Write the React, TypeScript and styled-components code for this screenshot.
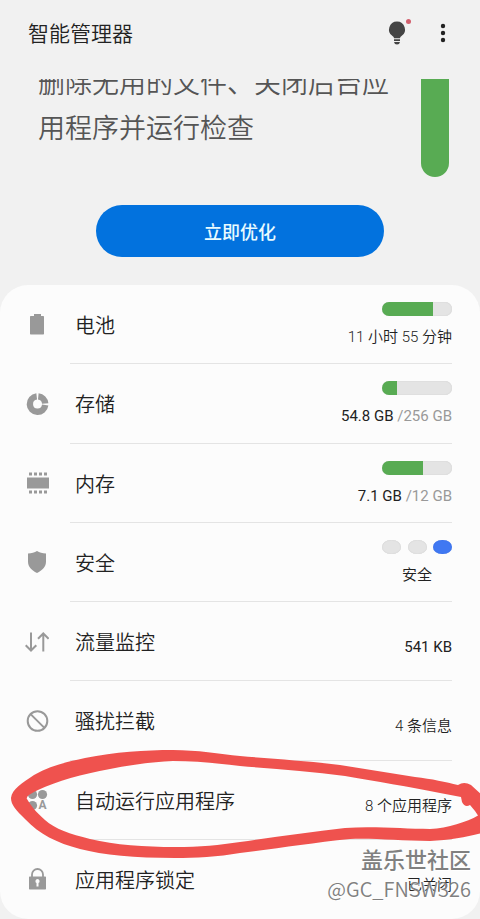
import React from "react";
import styled, { createGlobalStyle } from "styled-components";

const GlobalStyle = createGlobalStyle`
  *, *::before, *::after { box-sizing: border-box; }
  body {
    margin: 0;
    background: #f1f1f1;
    color: #222;
    font-family: Roboto, "Noto Sans CJK SC", sans-serif;
    font-weight: 350;
  }
`;

const Screen = styled.div`
  position: relative;
  display: flex;
  flex-direction: column;
  min-height: 100vh;
  overflow: hidden;
`;

const Header = styled.header`
  display: flex;
  align-items: center;
  height: 79px;
  padding: 0 28px 12px;
`;

const Title = styled.h1`
  flex: 1;
  margin: 0;
  font-size: 21px;
  line-height: 32px;
  font-weight: 350;
`;

const HeaderActions = styled.div`
  display: flex;
  gap: 14px;
  margin-right: -7px;
`;

const IconButton = styled.button`
  display: grid;
  place-items: center;
  width: 32px;
  height: 32px;
  padding: 0;
  border: 0;
  background: none;
`;

const Hero = styled.section`
  display: flex;
  justify-content: space-between;
  gap: 20px;
  height: 98px;
  padding: 0 31px 0 38px;
  overflow: hidden;
`;

const HeroText = styled.p`
  margin: -17px 0 0;
  color: #555;
  font-size: 27px;
  line-height: 45px;
`;

const HeroGauge = styled.div`
  flex: none;
  width: 28px;
  border-radius: 0 0 14px 14px;
  background: #58ab53;
`;

const OptimizeButton = styled.button`
  align-self: center;
  width: 60%;
  height: 52px;
  margin: 28px 0;
  border: 0;
  border-radius: 26px;
  background: #0272de;
  color: #e9fbff;
  font-family: inherit;
  font-size: 18px;
  font-weight: 500;
`;

const Card = styled.ul`
  flex: 1;
  display: grid;
  grid-auto-rows: minmax(79px, 1fr);
  margin: 0;
  padding: 0;
  border-radius: 28px;
  background: #fcfcfc;
  list-style: none;
`;

const RowBody = styled.span`
  display: flex;
  justify-content: space-between;
  padding-left: 5px;
  border-bottom: 1px solid #e4e4e4;
`;

const Item = styled.li`
  position: relative;
  display: grid;

  &:last-child ${RowBody} {
    border-bottom: 0;
  }
`;

const RowLink = styled.a`
  display: grid;
  grid-template-columns: 45px 1fr;
  padding: 0 28px 0 25px;
  color: inherit;
  text-decoration: none;
`;

const RowIcon = styled.svg`
  align-self: center;
  width: 24px;
  height: 24px;
  color: #999;
`;

const Label = styled.span`
  align-self: center;
  padding-top: 4px;
  font-size: 20px;
  line-height: 30px;
`;

const Status = styled.span<{ $centered?: boolean; $plain?: boolean }>`
  display: flex;
  flex-direction: column;
  align-items: ${(p) => (p.$centered ? "center" : "flex-end")};
  justify-content: center;
  gap: 10px;
  padding-top: ${(p) => (p.$plain ? 12 : 2)}px;
`;

const Value = styled.span<{ $latin?: boolean }>`
  font-size: 15px;
  line-height: 22px;
  font-weight: ${(p) => (p.$latin ? 400 : 350)};
`;

const Muted = styled.span`
  color: #999;
`;

const Meter = styled.span`
  display: flex;
  width: 70px;
  height: 14px;
  border-radius: 7px;
  background: #e4e4e4;
  box-shadow: inset 0 0 1px #bbb;
  overflow: hidden;
`;

const MeterFill = styled.span`
  background: #58ab53;
`;

const Dots = styled.span`
  display: flex;
  justify-content: space-between;
  width: 70px;
`;

const Dot = styled.span<{ $active?: boolean }>`
  width: 19px;
  height: 14px;
  border-radius: 9px / 7px;
  background: ${(p) => (p.$active ? "#4078f2" : "#e4e4e4")};
  box-shadow: inset 0 0 1px ${(p) => (p.$active ? "#2a5fd8" : "#bbb")};
`;

const Marker = styled.svg`
  position: absolute;
  top: -20px;
  left: 0;
  z-index: 1;
  width: 100%;
  height: 120px;
  pointer-events: none;
`;

const Watermark = styled.div`
  position: absolute;
  right: 9px;
  bottom: 16px;
  z-index: 2;
  display: flex;
  flex-direction: column;
  align-items: flex-end;
  gap: 2px;
  color: #808080;
  font-family: "Noto Sans CJK SC", sans-serif;
  text-shadow: 1px 1px 1px #fff;
  pointer-events: none;
`;

const WatermarkName = styled.span`
  font-size: 22px;
  line-height: 30px;
  font-weight: 500;
`;

const WatermarkUser = styled.span`
  font-size: 20px;
  line-height: 28px;
`;

const icons = {
  battery: (
    <path fill="currentColor" d="M9 1h7v2h2.3q.7 0 .7.7v17q0 .8-.7.8H5.7q-.7 0-.7-.8v-17q0-.7.7-.7H9z" />
  ),
  storage: (
    <g fill="none" stroke="currentColor" strokeWidth="6.4">
      <path d="M11.7 4.4A7.7 7.7 0 1 0 20.2 13" />
      <path d="M13.3 4.4A7.7 7.7 0 0 1 20.2 11.4" />
    </g>
  ),
  memory: (
    <path
      fill="currentColor"
      d="M2 6.500h22v11H2zM4 1.500h3v3H4zm5 0h3v3H9zm5 0h3v3h-3zm5 0h3v3h-3zM4 19.500h3v3H4zm5 0h3v3H9zm5 0h3v3h-3zm5 0h3v3h-3z"
    />
  ),
  shield: (
    <path fill="currentColor" d="M12 1c2.4 1.5 5.4 2.2 9 2.4v8.2c0 5.2-3.6 9-9 11.4-5.4-2.4-9-6.2-9-11.4V3.4C6.6 3.2 9.6 2.5 12 1z" />
  ),
  traffic: (
    <path
      fill="none"
      stroke="currentColor"
      strokeWidth="2"
      d="M6 2.5v18M.7 15.2 6 20.5l5.3-5.3M18.3 21.5V3.5M13 8.8l5.3-5.3 5.3 5.3"
    />
  ),
  block: (
    <g fill="none" stroke="currentColor" strokeWidth="2">
      <circle cx="12.5" cy="12" r="9.8" />
      <path d="m5.6 5.1 13.8 13.8" />
    </g>
  ),
  apps: (
    <g fill="currentColor">
      <circle cx="7.5" cy="6.5" r="4.6" />
      <circle cx="17.5" cy="6.5" r="4.6" />
      <circle cx="7.5" cy="17.5" r="4.6" />
      <text x="17.5" y="21" textAnchor="middle" fontSize="12" fontWeight="700">
        A
      </text>
    </g>
  ),
  lock: (
    <>
      <path fill="none" stroke="currentColor" strokeWidth="1.8" d="M7 10V7.5a5.5 5.5 0 0 1 11 0V10" />
      <path
        fill="currentColor"
        fillRule="evenodd"
        d="M4.7 9.5h15.6q.7 0 .7.7v11.6q0 .7-.7.7H4.7q-.7 0-.7-.7V10.2q0-.7.7-.7zm7.8 2.5a2.2 2.2 0 0 0-1 4.1V19.5h2v-3.4a2.2 2.2 0 0 0-1-4.1z"
      />
    </>
  ),
};

type Entry = {
  icon: keyof typeof icons;
  label: string;
  value: string;
  total?: string;
  percent?: number;
  levels?: boolean[];
  latin?: boolean;
  marked?: boolean;
};

const entries: Entry[] = [
  { icon: "battery", label: "电池", value: "11 小时 55 分钟", percent: 73 },
  { icon: "storage", label: "存储", value: "54.8 GB ", total: "/256 GB", percent: 21, latin: true },
  { icon: "memory", label: "内存", value: "7.1 GB ", total: "/12 GB", percent: 59, latin: true },
  { icon: "shield", label: "安全", value: "安全", levels: [false, false, true] },
  { icon: "traffic", label: "流量监控", value: "541 KB", latin: true },
  { icon: "block", label: "骚扰拦截", value: "4 条信息" },
  { icon: "apps", label: "自动运行应用程序", value: "8 个应用程序", marked: true },
  { icon: "lock", label: "应用程序锁定", value: "已关闭" },
];

function HandDrawnLoop() {
  return (
    <Marker viewBox="0 740 480 120" preserveAspectRatio="none" aria-hidden="true">
      <path
        fill="#ef524e"
        fillRule="evenodd"
        d="M11 797C12 788 22 782 34 774C50 765 66 761 85 757C115 751 145 749 173 749C197 749 220 753 240 755C275 758 310 760 340 764C365 768 390 772 415 776C432 778 446 781 458 784Q464 780 471 784L482 794V832C468 836 450 839 430 840C400 840 375 837 350 838C310 842 275 848 240 852C218 856 195 857 175 857C135 857 103 854 80 848C57 842 39 833 25 818C16 809 11 804 11 797Z
        M27 798C31 805 36 811 45 819C55 828 70 833 90 838C115 844 145 846 175 846C200 846 220 844 240 841C275 836 310 831 345 827C375 825 405 828 430 828C448 827 467 821 478 814.5L475 810L470 804Q465 807 462 801L461 796L440 792C410 786 375 780 345 775C310 770 275 768 240 765C215 762 195 760 173 760C150 761 130 764 110 768C82 773 57 780 38 789Q25 795 27 798Z"
      />
    </Marker>
  );
}

function EntryRow({ entry }: { entry: Entry }) {
  const plain = entry.percent === undefined && !entry.levels;
  return (
    <Item>
      <RowLink href={`#${entry.icon}`}>
        <RowIcon viewBox="0 0 24 24" aria-hidden="true">
          {icons[entry.icon]}
        </RowIcon>
        <RowBody>
          <Label>{entry.label}</Label>
          <Status $centered={!!entry.levels} $plain={plain}>
            {entry.percent !== undefined && (
              <Meter>
                <MeterFill style={{ width: `${entry.percent}%` }} />
              </Meter>
            )}
            {entry.levels && (
              <Dots>
                {entry.levels.map((active, i) => (
                  <Dot key={i} $active={active} />
                ))}
              </Dots>
            )}
            <Value $latin={entry.latin}>
              {entry.value}
              {entry.total && <Muted>{entry.total}</Muted>}
            </Value>
          </Status>
        </RowBody>
      </RowLink>
      {entry.marked && <HandDrawnLoop />}
    </Item>
  );
}

export default function App() {
  return (
    <>
      <GlobalStyle />
      <Screen>
        <Header>
          <Title>智能管理器</Title>
          <HeaderActions>
            <IconButton type="button" aria-label="提示">
              <svg width="32" height="32" viewBox="0 0 32 32">
                <path
                  fill="#444"
                  d="M16 3.5a8 8 0 0 0-4.5 14.6Q13 19 13 20.2h6q0-1.2 1.5-2.1A8 8 0 0 0 16 3.5zM13 21.3h6v1.7h-6zM13 24h6Q18.5 26.5 16 26.5t-3-2.5z"
                />
                <circle cx="27.5" cy="3.5" r="2.5" fill="#d2606e" />
              </svg>
            </IconButton>
            <IconButton type="button" aria-label="更多选项">
              <svg width="32" height="32" viewBox="0 0 32 32" fill="#222">
                <circle cx="16" cy="8" r="2.2" />
                <circle cx="16" cy="15" r="2.2" />
                <circle cx="16" cy="22" r="2.2" />
              </svg>
            </IconButton>
          </HeaderActions>
        </Header>
        <Hero>
          <HeroText>删除无用的文件、关闭后台应用程序并运行检查</HeroText>
          <HeroGauge />
        </Hero>
        <OptimizeButton type="button">立即优化</OptimizeButton>
        <Card>
          {entries.map((entry) => (
            <EntryRow key={entry.icon} entry={entry} />
          ))}
        </Card>
        <Watermark>
          <WatermarkName>盖乐世社区</WatermarkName>
          <WatermarkUser>@GC_FNSW326</WatermarkUser>
        </Watermark>
      </Screen>
    </>
  );
}
